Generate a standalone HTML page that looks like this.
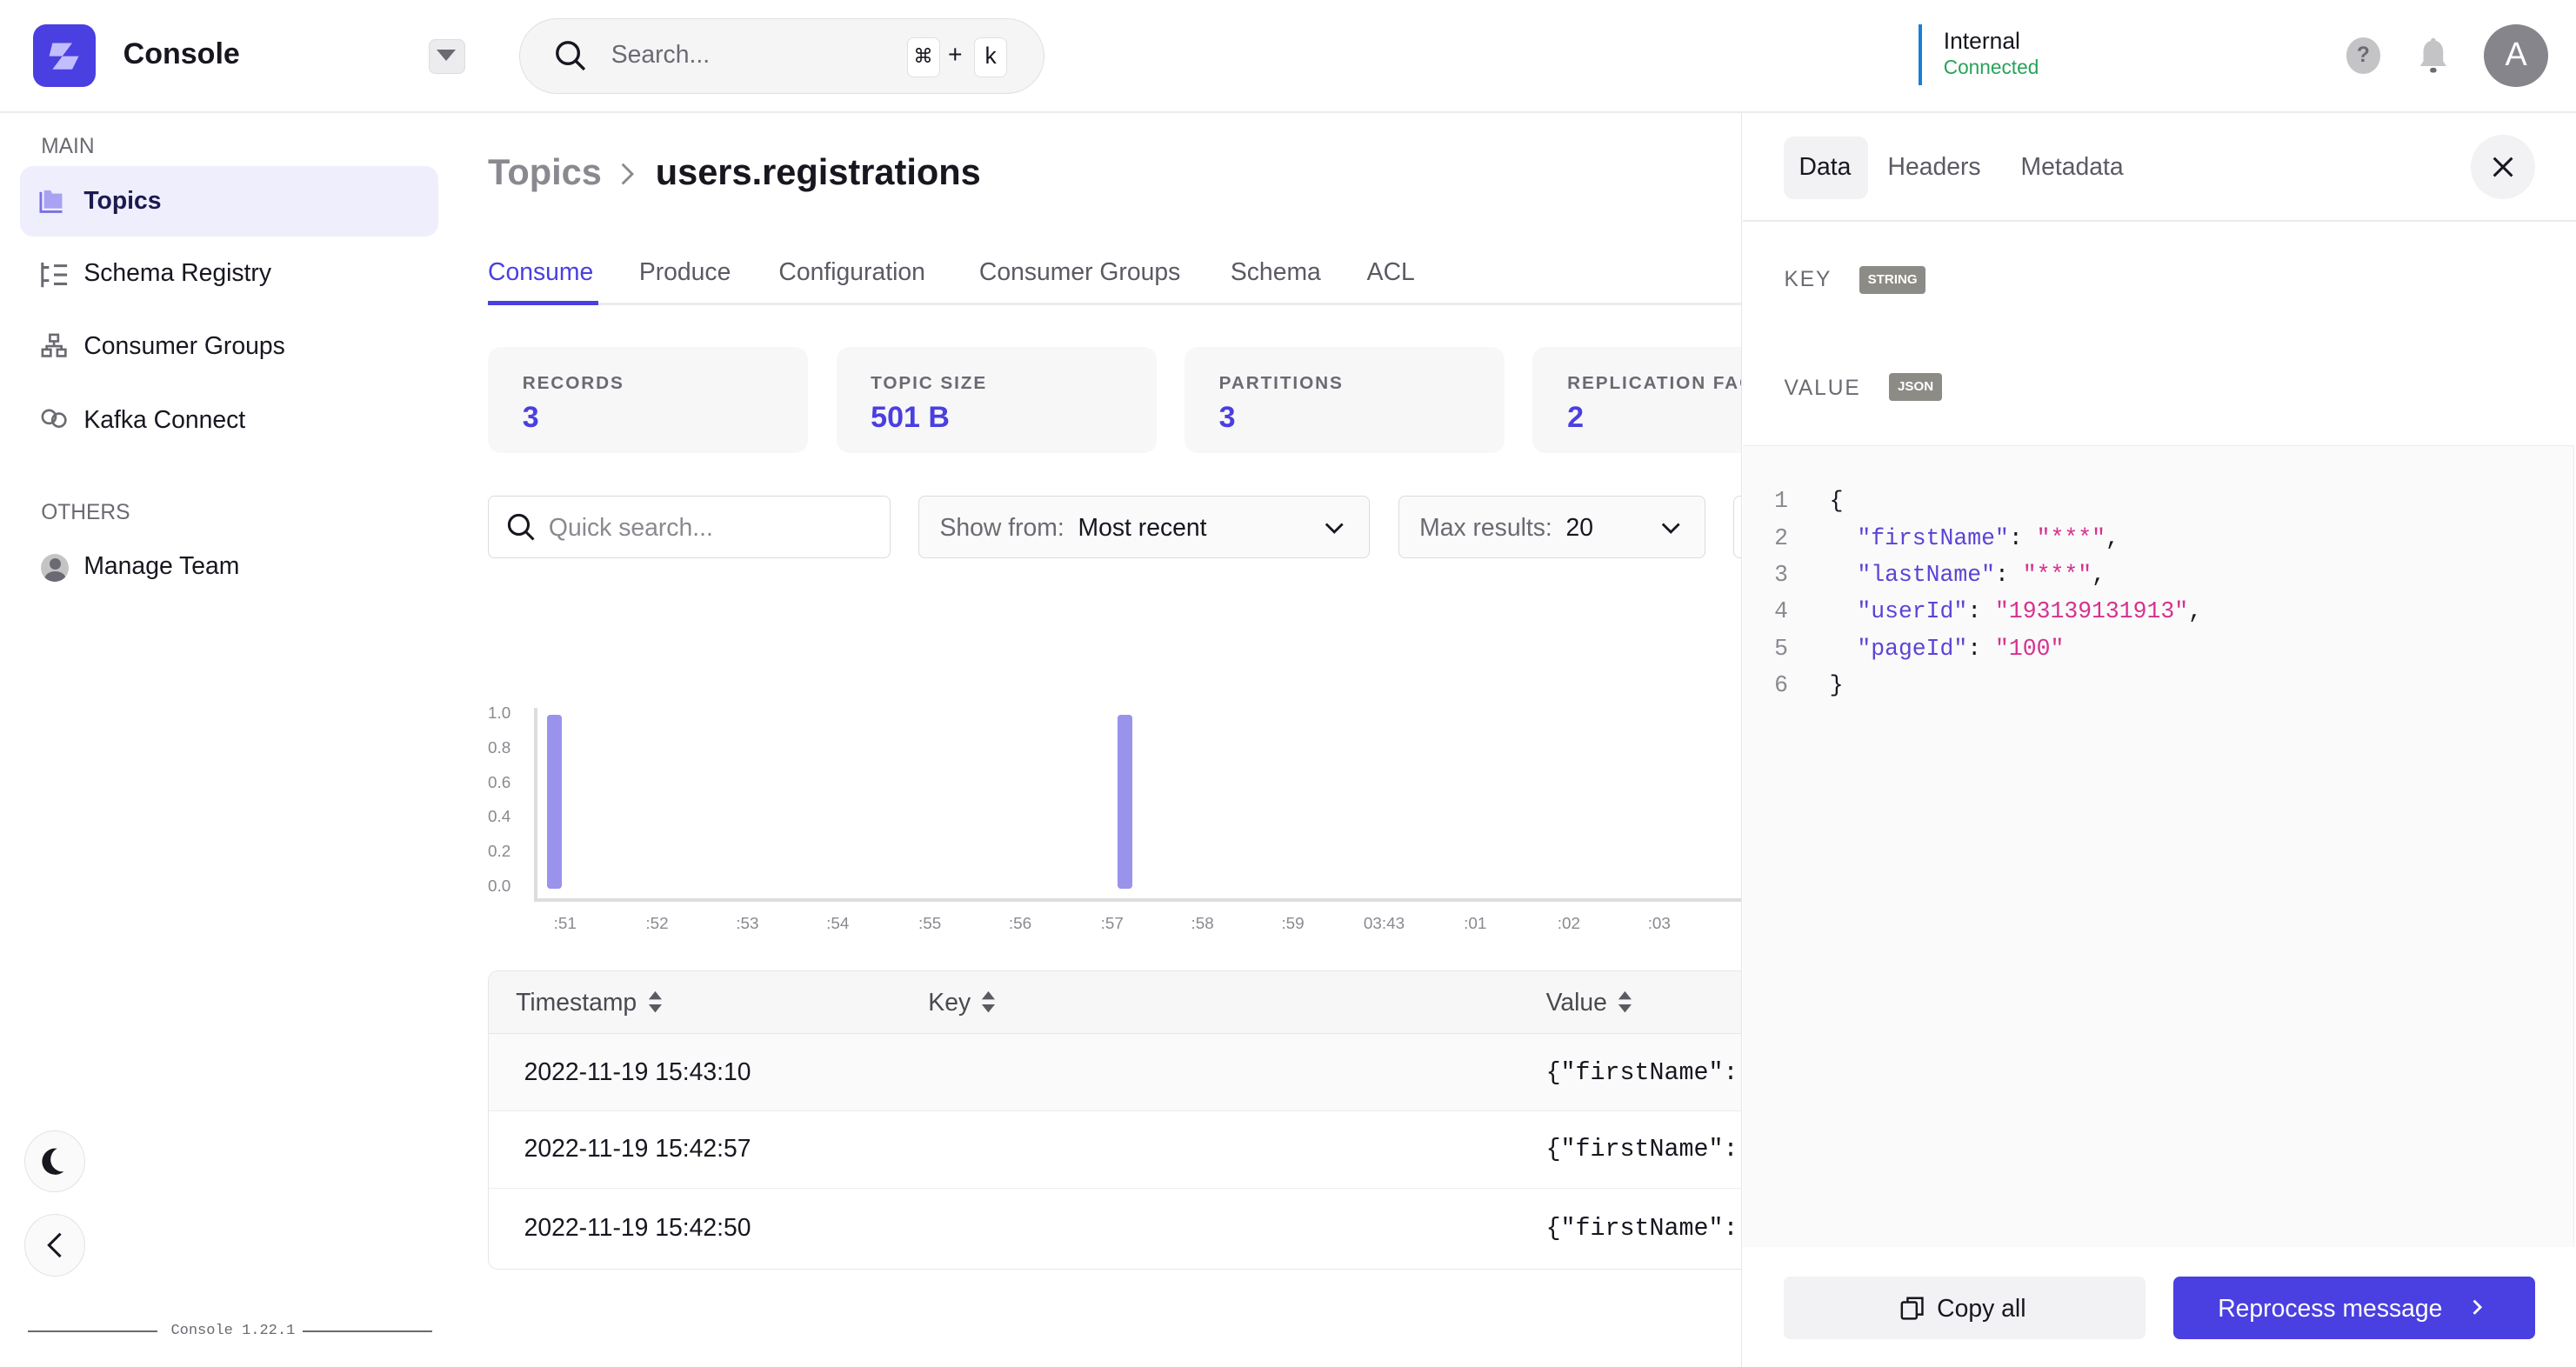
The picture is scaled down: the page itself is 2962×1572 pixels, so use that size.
<!DOCTYPE html>
<html><head><meta charset="utf-8"><style>
*{box-sizing:border-box;margin:0;padding:0}
html,body{width:2962px;height:1572px;overflow:hidden;background:#fff}
#w{zoom:1.88903;width:1568px;height:832px;position:relative;font-family:"Liberation Sans",sans-serif;color:#18161f;overflow:hidden}
.a{position:absolute}
.mono{font-family:"Liberation Mono","DejaVu Sans Mono",monospace}
.card{background:#f7f7f8;border-radius:8px;height:65px;width:195px;top:211px}
.card .l{position:absolute;left:21px;top:16px;font-size:11px;letter-spacing:1px;color:#6b6a72;font-weight:bold}
.card .v{position:absolute;left:21px;top:33px;font-size:18px;font-weight:bold;color:#4a3fe0}
.nav{font-size:15px;color:#18161f}
.tab{font-size:15px;color:#5b5a63;top:157px}
.yl{font-size:10px;color:#8a8990;left:297px}
.xl{font-size:10px;color:#8a8990;top:557px}
.ln{color:#8a8990}
.k{color:#5b44d6}.s{color:#d6318f}
.sort{display:inline-block;vertical-align:-2px;margin-left:6px}
</style></head><body><div id="w">
<div class="a" style="left:0;top:68px;width:1568px;height:1px;background:#ececee"></div>
<div class="a" style="left:20px;top:15px;width:38px;height:38px;border-radius:8px;background:#4a3fe0"></div>
<svg class="a" style="left:26px;top:22px" width="26" height="24" viewBox="0 0 26 24"><path d="M6 4h12l-6 8h10l-4 8H6l6-8H4z" fill="#c8c4ff" opacity=".95"/></svg>
<div class="a" style="left:75px;top:23px;font-size:18px;font-weight:bold">Console</div>
<div class="a" style="left:261px;top:24px;width:22px;height:21px;border-radius:4px;background:#ececee;border:1px solid #ddd"></div>
<div class="a" style="left:266px;top:30px;width:0;height:0;border-left:6px solid transparent;border-right:6px solid transparent;border-top:7px solid #6b6a72"></div>
<div class="a" style="left:316px;top:11px;width:320px;height:46px;border-radius:23px;background:#f5f5f6;border:1px solid #e0e0e2"></div>
<svg class="a" style="left:337px;top:24px" width="20" height="20" viewBox="0 0 20 20"><circle cx="8.5" cy="8.5" r="6.5" fill="none" stroke="#18161f" stroke-width="1.8"/><path d="M13.5 13.5l5 5" stroke="#18161f" stroke-width="1.8"/></svg>
<div class="a" style="left:372px;top:25px;font-size:15px;color:#6b6a72">Search...</div>
<div class="a" style="left:552px;top:23px;width:20px;height:24px;background:#fff;border:1px solid #e0e0e2;border-radius:4px;font-size:12px;text-align:center;line-height:22px">⌘</div>
<div class="a" style="left:577px;top:25px;font-size:15px">+</div>
<div class="a" style="left:593px;top:23px;width:20px;height:24px;background:#fff;border:1px solid #e0e0e2;border-radius:4px;font-size:14px;text-align:center;line-height:22px">k</div>
<div class="a" style="left:1168px;top:15px;width:2px;height:37px;background:#1a7fd4"></div>
<div class="a" style="left:1183px;top:17px;font-size:14px">Internal</div>
<div class="a" style="left:1183px;top:34px;font-size:12px;color:#27a35a">Connected</div>
<div class="a" style="left:1428px;top:23px;width:21px;height:22px;border-radius:50%;background:#c4c4c6;color:#6b6a72;font-size:13px;font-weight:bold;text-align:center;line-height:22px">?</div>
<svg class="a" style="left:1471px;top:22px" width="20" height="24" viewBox="0 0 20 24"><path d="M10 1c-1 0-1.5.7-1.5 1.5C5.5 3.5 4 6 4 9v6l-2 3h16l-2-3V9c0-3-1.5-5.5-4.5-6.5C11.5 1.7 11 1 10 1z" fill="#c4c4c6"/><rect x="8" y="19" width="4" height="3" rx="1.5" fill="#6b6a72"/></svg>
<div class="a" style="left:1512px;top:15px;width:39px;height:38px;border-radius:50%;background:#86858c;color:#fff;font-size:20px;text-align:center;line-height:38px">A</div>
<div class="a" style="left:25px;top:82px;font-size:13px;color:#6b6a72">MAIN</div>
<div class="a" style="left:12px;top:101px;width:255px;height:43px;border-radius:8px;background:#efeefc"></div>
<svg class="a" style="left:24px;top:115px" width="16" height="15" viewBox="0 0 16 15"><path d="M1 2v12h13" fill="none" stroke="#7a70e6" stroke-width="1.5"/><path d="M3 1h4l1 2h6v9H3z" fill="#a9a2f2"/></svg>
<div class="a nav" style="left:51px;top:114px;font-weight:bold;color:#1d1a4f">Topics</div>
<svg class="a" style="left:24px;top:159px" width="18" height="17" viewBox="0 0 18 17" fill="none" stroke="#6b6a72" stroke-width="1.6"><path d="M2 1v15M2 4h4M2 12h4M9 3h8M9 8.5h8M9 14h8"/></svg>
<div class="a nav" style="left:51px;top:158px">Schema Registry</div>
<svg class="a" style="left:25px;top:203px" width="16" height="16" viewBox="0 0 16 16" fill="none" stroke="#6b6a72" stroke-width="1.4"><rect x="5.5" y="1" width="5" height="4"/><rect x="1" y="10" width="5" height="4"/><rect x="10" y="10" width="5" height="4"/><path d="M8 5v3M3.5 10V8h9v2"/></svg>
<div class="a nav" style="left:51px;top:202px">Consumer Groups</div>
<svg class="a" style="left:25px;top:248px" width="17" height="14" viewBox="0 0 17 14" fill="none" stroke="#6b6a72" stroke-width="1.4"><circle cx="5" cy="6" r="4"/><circle cx="11" cy="8" r="4"/></svg>
<div class="a nav" style="left:51px;top:247px">Kafka Connect</div>
<div class="a" style="left:25px;top:305px;font-size:13px;color:#6b6a72">OTHERS</div>
<div class="a" style="left:25px;top:337px;width:17px;height:17px;border-radius:50%;background:#c4c4c6;overflow:hidden"><div style="position:absolute;left:5px;top:3px;width:7px;height:7px;border-radius:50%;background:#6b6a72"></div><div style="position:absolute;left:2px;top:11px;width:13px;height:10px;border-radius:50%;background:#6b6a72"></div></div>
<div class="a nav" style="left:51px;top:336px">Manage Team</div>
<div class="a" style="left:15px;top:688px;width:37px;height:38px;border-radius:50%;background:#fafafa;border:1px solid #e3e3e5"></div>
<svg class="a" style="left:24px;top:697px" width="20" height="20" viewBox="0 0 20 20"><path d="M14 16A7.5 7.5 0 0 1 12 2a8 8 0 1 0 4 14z" fill="#18161f" transform="translate(-1 0)"/></svg>
<div class="a" style="left:15px;top:739px;width:37px;height:38px;border-radius:50%;background:#fafafa;border:1px solid #e3e3e5"></div>
<svg class="a" style="left:24px;top:748px" width="20" height="20" viewBox="0 0 20 20"><path d="M13 3l-7 7 7 7" fill="none" stroke="#18161f" stroke-width="1.6"/></svg>
<div class="a" style="left:17px;top:810px;width:79px;height:1px;background:#6b6a72"></div>
<div class="a mono" style="left:104px;top:805px;font-size:9px;color:#6b6a72">Console 1.22.1</div>
<div class="a" style="left:184px;top:810px;width:79px;height:1px;background:#6b6a72"></div>
<div class="a" style="left:297px;top:92px;font-size:22px;font-weight:bold;color:#8a8990">Topics</div>
<svg class="a" style="left:376px;top:98px" width="12" height="16" viewBox="0 0 12 16"><path d="M3 2l6 6-6 6" fill="none" stroke="#8a8990" stroke-width="1.5"/></svg>
<div class="a" style="left:399px;top:92px;font-size:22px;font-weight:bold">users.registrations</div>
<div class="a" style="left:297px;top:184px;width:763px;height:2px;background:#ececee"></div>
<div class="a" style="left:297px;top:183px;width:67px;height:3px;background:#4a3fe0"></div>
<div class="a tab" style="left:297px;color:#4a3fe0">Consume</div>
<div class="a tab" style="left:389px">Produce</div>
<div class="a tab" style="left:474px">Configuration</div>
<div class="a tab" style="left:596px">Consumer Groups</div>
<div class="a tab" style="left:749px">Schema</div>
<div class="a tab" style="left:832px">ACL</div>
<div class="a card" style="left:297px"><div class="l">RECORDS</div><div class="v">3</div></div>
<div class="a card" style="left:509px"><div class="l">TOPIC SIZE</div><div class="v">501 B</div></div>
<div class="a card" style="left:721px"><div class="l">PARTITIONS</div><div class="v">3</div></div>
<div class="a card" style="left:933px;white-space:nowrap"><div class="l">REPLICATION FACTOR</div><div class="v">2</div></div>
<div class="a" style="left:297px;top:302px;width:245px;height:38px;border:1px solid #dcdce0;border-radius:4px"></div>
<svg class="a" style="left:308px;top:312px" width="18" height="18" viewBox="0 0 20 20"><circle cx="8.5" cy="8.5" r="6.5" fill="none" stroke="#18161f" stroke-width="1.8"/><path d="M13.5 13.5l5 5" stroke="#18161f" stroke-width="1.8"/></svg>
<div class="a" style="left:334px;top:313px;font-size:15px;color:#8a8990">Quick search...</div>
<div class="a" style="left:559px;top:302px;width:275px;height:38px;border:1px solid #dcdce0;border-radius:4px;background:#fafafa"></div>
<div class="a" style="left:572px;top:313px;font-size:15px;color:#6b6a72">Show from:&nbsp; <span style="color:#18161f">Most recent</span></div>
<svg class="a" style="left:805px;top:314px" width="14" height="14" viewBox="0 0 14 14"><path d="M2 5l5 5 5-5" fill="none" stroke="#18161f" stroke-width="1.5"/></svg>
<div class="a" style="left:851px;top:302px;width:187px;height:38px;border:1px solid #dcdce0;border-radius:4px;background:#fafafa"></div>
<div class="a" style="left:864px;top:313px;font-size:15px;color:#6b6a72">Max results:&nbsp; <span style="color:#18161f">20</span></div>
<svg class="a" style="left:1010px;top:314px" width="14" height="14" viewBox="0 0 14 14"><path d="M2 5l5 5 5-5" fill="none" stroke="#18161f" stroke-width="1.5"/></svg>
<div class="a" style="left:1055px;top:302px;width:20px;height:38px;border:1px solid #dcdce0;border-radius:4px"></div>
<div class="a yl" style="top:429px">1.0</div><div class="a yl" style="top:450px">0.8</div><div class="a yl" style="top:471px">0.6</div><div class="a yl" style="top:492px">0.4</div><div class="a yl" style="top:513px">0.2</div><div class="a yl" style="top:534px">0.0</div>
<div class="a" style="left:325px;top:431px;width:2px;height:118px;background:#ddd"></div>
<div class="a" style="left:325px;top:547px;width:740px;height:2px;background:#ddd"></div>
<div class="a" style="left:333px;top:435px;width:9px;height:106px;border-radius:2px;background:#9a93ec"></div>
<div class="a" style="left:680px;top:435px;width:9px;height:106px;border-radius:2px;background:#9a93ec"></div>
<div class="a xl" style="left:337px">:51</div><div class="a xl" style="left:393px">:52</div><div class="a xl" style="left:448px">:53</div><div class="a xl" style="left:503px">:54</div><div class="a xl" style="left:559px">:55</div><div class="a xl" style="left:614px">:56</div><div class="a xl" style="left:670px">:57</div><div class="a xl" style="left:725px">:58</div><div class="a xl" style="left:780px">:59</div><div class="a xl" style="left:830px">03:43</div><div class="a xl" style="left:891px">:01</div><div class="a xl" style="left:948px">:02</div><div class="a xl" style="left:1003px">:03</div>
<div class="a" style="left:297px;top:591px;width:800px;height:182px;border:1px solid #e6e6e8;border-radius:6px;overflow:hidden">
<div style="height:38px;background:#f7f7f8;border-bottom:1px solid #e6e6e8"></div>
<div style="height:47px;background:#fafafa;border-bottom:1px solid #ececee"></div>
<div style="height:47px;border-bottom:1px solid #ececee"></div>
</div>
<div class="a" style="left:314px;top:602px;font-size:15px;color:#4a4950">Timestamp<svg class="sort" width="10" height="15" viewBox="0 0 10 15"><path d="M5 1l4 5H1zM5 14l4-5H1z" fill="#5b5a63"/></svg></div>
<div class="a" style="left:565px;top:602px;font-size:15px;color:#4a4950">Key<svg class="sort" width="10" height="15" viewBox="0 0 10 15"><path d="M5 1l4 5H1zM5 14l4-5H1z" fill="#5b5a63"/></svg></div>
<div class="a" style="left:941px;top:602px;font-size:15px;color:#4a4950">Value<svg class="sort" width="10" height="15" viewBox="0 0 10 15"><path d="M5 1l4 5H1zM5 14l4-5H1z" fill="#5b5a63"/></svg></div>
<div class="a" style="left:319px;top:644px;font-size:15px">2022-11-19 15:43:10</div>
<div class="a" style="left:319px;top:691px;font-size:15px">2022-11-19 15:42:57</div>
<div class="a" style="left:319px;top:739px;font-size:15px">2022-11-19 15:42:50</div>
<div class="a mono" style="left:941px;top:644px;font-size:15px">{"firstName":"</div>
<div class="a mono" style="left:941px;top:691px;font-size:15px">{"firstName":"</div>
<div class="a mono" style="left:941px;top:739px;font-size:15px">{"firstName":"</div>
<div class="a" style="left:1060px;top:69px;width:508px;height:763px;background:#fff;border-left:1px solid #e6e6e8"></div>
<div class="a" style="left:1086px;top:83px;width:51px;height:38px;border-radius:6px;background:#f2f2f4"></div>
<div class="a" style="left:1095px;top:93px;font-size:15px">Data</div>
<div class="a" style="left:1149px;top:93px;font-size:15px;color:#5b5a63">Headers</div>
<div class="a" style="left:1230px;top:93px;font-size:15px;color:#5b5a63">Metadata</div>
<div class="a" style="left:1504px;top:82px;width:39px;height:39px;border-radius:50%;background:#f2f2f4"></div>
<svg class="a" style="left:1515px;top:93px" width="17" height="17" viewBox="0 0 17 17"><path d="M3 3l11 11M14 3L3 14" stroke="#18161f" stroke-width="1.6"/></svg>
<div class="a" style="left:1061px;top:134px;width:507px;height:1px;background:#ececee"></div>
<div class="a" style="left:1086px;top:163px;font-size:13px;color:#6b6a72;letter-spacing:1px">KEY</div>
<div class="a" style="left:1132px;top:162px;width:40px;height:17px;border-radius:2px;background:#8c8b86;color:#fff;font-size:8px;font-weight:bold;text-align:center;line-height:17px">STRING</div>
<div class="a" style="left:1086px;top:229px;font-size:13px;color:#6b6a72;letter-spacing:1px">VALUE</div>
<div class="a" style="left:1150px;top:227px;width:32px;height:17px;border-radius:2px;background:#8c8b86;color:#fff;font-size:8px;font-weight:bold;text-align:center;line-height:17px">JSON</div>
<div class="a" style="left:1061px;top:271px;width:506px;height:488px;background:#fafafa;border-top:1px solid #ececee;border-right:1px solid #ececee"></div>
<div class="a mono" style="left:1080px;top:294px;font-size:14px;line-height:22.4px;white-space:pre"><span class="ln">1</span>   {
<span class="ln">2</span>     <span class="k">"firstName"</span>: <span class="s">"***"</span>,
<span class="ln">3</span>     <span class="k">"lastName"</span>: <span class="s">"***"</span>,
<span class="ln">4</span>     <span class="k">"userId"</span>: <span class="s">"193139131913"</span>,
<span class="ln">5</span>     <span class="k">"pageId"</span>: <span class="s">"100"</span>
<span class="ln">6</span>   }</div>
<div class="a" style="left:1086px;top:777px;width:220px;height:38px;border-radius:4px;background:#f2f2f4"></div>
<svg class="a" style="left:1156px;top:788px" width="16" height="16" viewBox="0 0 16 16" fill="none" stroke="#18161f" stroke-width="1.3"><rect x="1.5" y="4.5" width="9" height="10" rx="1"/><path d="M5 4.5V2h9v10h-3.5"/></svg>
<div class="a" style="left:1179px;top:788px;font-size:15px;font-weight:500">Copy all</div>
<div class="a" style="left:1323px;top:777px;width:220px;height:38px;border-radius:4px;background:#4a3fe0"></div>
<div class="a" style="left:1350px;top:788px;font-size:15px;color:#fff">Reprocess message</div>
<svg class="a" style="left:1502px;top:789px" width="12" height="14" viewBox="0 0 12 14"><path d="M4 3l4 4-4 4" fill="none" stroke="#fff" stroke-width="1.5"/></svg>
</div></body></html>
